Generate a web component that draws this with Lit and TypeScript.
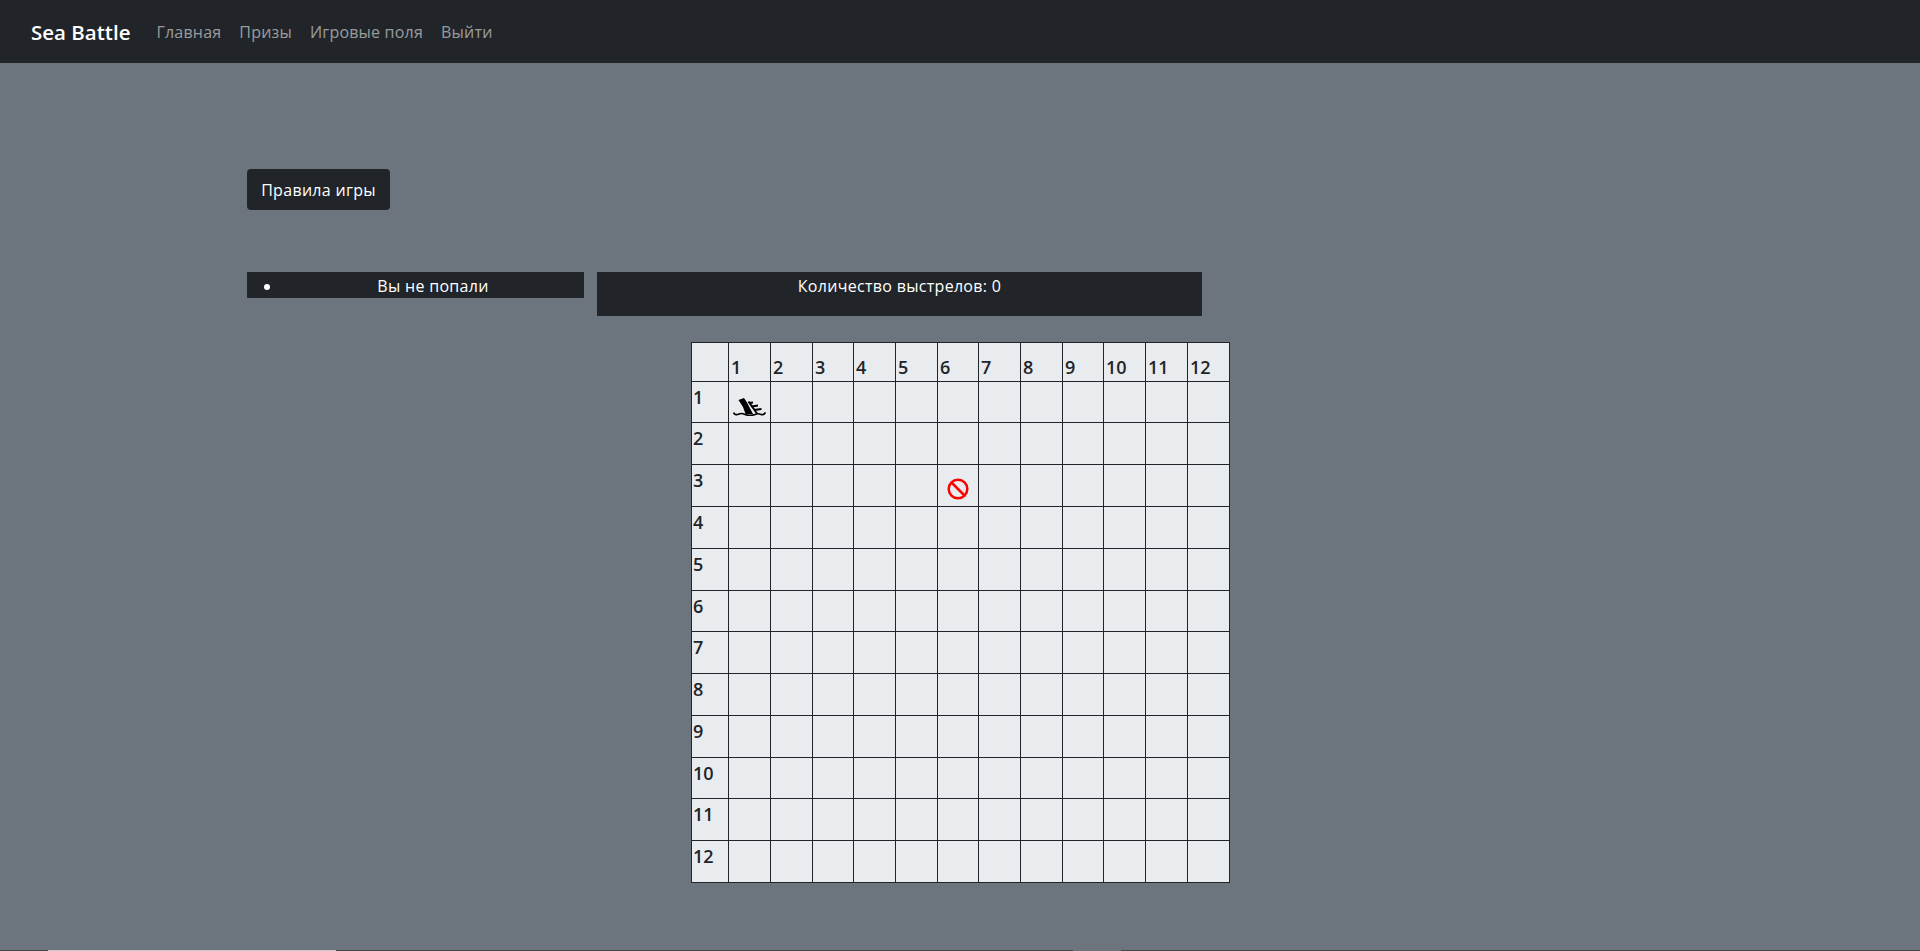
import { LitElement, css, html } from "lit";
import { customElement } from "lit/decorators.js";

const SIZE = 12;
const NUMS = Array.from({ length: SIZE }, (_, i) => i + 1);
const COLS = [42, 42, 41, 42, 42, 41, 42, 42, 41, 42, 42, 42];
const ROWS = [41, 42, 42, 42, 42, 41, 42, 42, 42, 41, 42, 42];

const sunk = html`<svg class="ship" viewBox="0 0 33 18" width="33" height="18">
  <path fill="#000" d="M5.500 2 L11 0 L14 4.500 L20 16 L12.500 16 L10 9 Z"/>
  <path fill="none" stroke="#000" stroke-width="2" d="M15.500 3.500 L24 15.500"/>
  <path fill="none" stroke="#000" stroke-width="1.800" d="M16 5 L20 4.500 M18.500 8.500 L25 7.500 M21 12 L28.500 11"/>
  <path fill="none" stroke="#000" stroke-width="1.700" d="M0.500 14.500 C1.500 17 4 17 6 16 C8 15 10 15.500 12 16.500 C15 17.500 19 17.500 22 16.500 C24 15.500 26 15.500 28 16.500 C30 17 31.500 16.500 32.500 14.500"/>
</svg>`;

const miss = html`<svg class="ban" viewBox="0 0 22 22" width="22" height="22">
  <circle cx="11" cy="11" r="9.300" fill="none" stroke="#f00" stroke-width="2.500"/>
  <path d="M4.500 4.500 L17.500 17.500" stroke="#f00" stroke-width="2.500"/>
</svg>`;

@customElement("app-root")
export class AppRoot extends LitElement {
  static styles = css`
    :host {
      display: flex;
      flex-direction: column;
      min-height: 951px;
      background: #6c757d;
      font-family: "Open Sans", "Noto Sans", sans-serif;
      font-size: 16px;
      letter-spacing: 0.3px;
      color: #fff;
    }
    .navbar {
      display: flex;
      align-items: center;
      height: 63px;
      padding-left: 31px;
      background: #212529;
    }
    .brand {
      font-size: 20.500px;
      font-weight: 600;
      letter-spacing: 0;
      margin-right: 26px;
    }
    .nav {
      display: flex;
      gap: 18px;
      letter-spacing: 0.2px;
      color: rgba(255, 255, 255, 0.55);
    }
    main {
      flex: 1;
      padding: 106px 0 0 247px;
    }
    .rules {
      display: block;
      box-sizing: border-box;
      width: 143px;
      height: 41px;
      padding: 0;
      border: 0;
      border-radius: 4px;
      background: #212529;
      color: #fff;
      font: inherit;
      letter-spacing: inherit;
    }
    .status {
      display: flex;
      align-items: flex-start;
      gap: 13px;
      margin-top: 62px;
    }
    .hits {
      box-sizing: border-box;
      width: 337px;
      height: 26px;
      margin: 0;
      padding: 0 0 0 35px;
      background: #212529;
      line-height: 28px;
      text-align: center;
    }
    .shots {
      width: 605px;
      height: 44px;
      background: #212529;
      line-height: 28px;
      text-align: center;
    }
    .board {
      border-collapse: collapse;
      table-layout: fixed;
      width: 539px;
      margin: 26px 0 0 444px;
      background: #e9ecef;
      color: #212529;
      font-size: 18px;
      letter-spacing: 0;
    }
    .board td,
    .board th {
      box-sizing: border-box;
      padding: 0 0 0 1px;
      border: 1px solid #212529;
      line-height: 24px;
      font-weight: 600;
      text-align: left;
      vertical-align: top;
    }
    .board thead th {
      height: 39px;
      padding: 0 0 2px 2px;
      vertical-align: bottom;
    }
    .board tbody th {
      padding-top: 3px;
    }
    .board td.mark {
      text-align: center;
      vertical-align: middle;
      line-height: 0;
    }
    .board td.hit {
      padding: 9px 0 0;
    }
    .board td.miss {
      padding: 7px 0 0;
    }
    .ship,
    .ban {
      display: inline-block;
    }
    .scroll {
      display: flex;
      height: 1px;
      background: #44474a;
    }
    .thumb {
      width: 288px;
      margin-left: 48px;
      background: #c8c8c8;
    }
    .thumb2 {
      width: 48px;
      margin-left: 737px;
      background: #6c757d;
    }
  `;

  cell(row: number, col: number) {
    if (row === 1 && col === 1) return html`<td class="mark hit">${sunk}</td>`;
    if (row === 3 && col === 6) return html`<td class="mark miss">${miss}</td>`;
    return html`<td></td>`;
  }

  render() {
    return html`
      <nav class="navbar">
        <span class="brand">Sea Battle</span>
        <div class="nav">
          <span>Главная</span><span>Призы</span><span>Игровые поля</span
          ><span>Выйти</span>
        </div>
      </nav>
      <main>
        <button class="rules">Правила игры</button>
        <div class="status">
          <ul class="hits"><li>Вы не попали</li></ul>
          <div class="shots">Количество выстрелов: 0</div>
        </div>
        <table class="board">
          <colgroup>
            <col style="width:37px" />
            ${COLS.map((w) => html`<col style="width:${w}px" />`)}
          </colgroup>
          <thead>
            <tr>
              <th></th>
              ${NUMS.map((n) => html`<th>${n}</th>`)}
            </tr>
          </thead>
          <tbody>
            ${NUMS.map(
              (r) => html`<tr style="height:${ROWS[r - 1]}px">
                <th>${r}</th>
                ${NUMS.map((c) => this.cell(r, c))}
              </tr>`
            )}
          </tbody>
        </table>
      </main>
      <div class="scroll"><div class="thumb"></div><div class="thumb2"></div></div>
    `;
  }
}
